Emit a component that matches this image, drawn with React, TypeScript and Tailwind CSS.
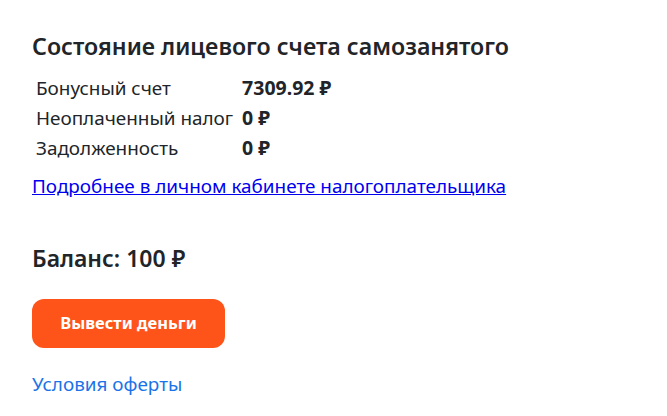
export default function App() {
  const rows = [
    ["Бонусный счет", "7309.92 ₽"],
    ["Неоплаченный налог", "0 ₽"],
    ["Задолженность", "0 ₽"],
  ];
  return (
    <div className="min-h-[416px] bg-white px-[32px] pt-[29px] text-[#212529]" style={{ fontFamily: '"Noto Sans", sans-serif' }}>
      <h2 className="text-[23.2px] font-semibold leading-[34px]">Состояние лицевого счета самозанятого</h2>
      <table className="mt-[10px] text-[18.9px] leading-[30px]">
        <tbody>
          {rows.map(([k, v]) => (
            <tr key={k}>
              <td className="py-0 pl-[4px] pr-[9px]">{k}</td>
              <td className="py-0 text-[19.5px] font-bold">{v}</td>
            </tr>
          ))}
        </tbody>
      </table>
      <a href="#" className="mt-[10px] block w-fit text-[18.9px] leading-[26px] text-[#0000ee] underline">
        Подробнее в личном кабинете налогоплательщика
      </a>
      <div className="mt-[44px] text-[23px] font-semibold leading-[30px]">Баланс: 100 ₽</div>
      <button className="mt-[26px] flex h-[49px] w-[193px] items-center justify-center rounded-[12px] bg-[#ff5419] text-[16.5px] font-bold text-white">
        Вывести деньги
      </button>
      <a href="#" className="mt-[23px] block w-fit text-[18.9px] leading-[26px] text-[#1a73e8]">
        Условия оферты
      </a>
    </div>
  );
}
